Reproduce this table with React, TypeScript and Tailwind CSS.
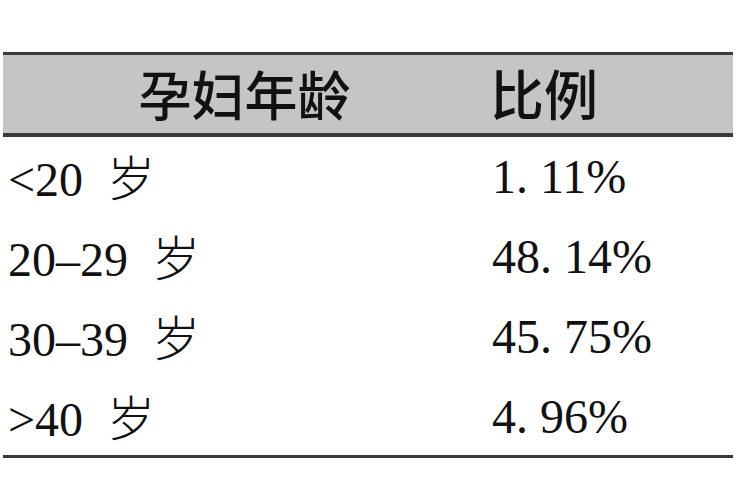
import React from "react";

const serif = { fontFamily: '"Liberation Serif", "Noto Sans CJK SC", serif' };

function Age({ pre, dash }: { pre: string; dash?: boolean }) {
  return (
    <span className="whitespace-pre">
      {dash ? pre.replace("-", "\u2013") : pre}
      <span className="inline-block w-[0.5em]" />
      <span className="font-light" style={{ fontFamily: '"Noto Sans CJK SC", sans-serif' }}>岁</span>
    </span>
  );
}

const rows: [string, string][] = [
  ["<20", "1. 11%"],
  ["20-29", "48. 14%"],
  ["30-39", "45. 75%"],
  [">40", "4. 96%"],
];

export default function App() {
  return (
    <div className="w-[750px] h-[500px] bg-white overflow-hidden pt-[52px] pl-[3px]">
      <div className="w-[730px]">
        <div className="border-t-[3px] border-b-[4px] border-[#3a3a3a] bg-[#c5c5c5] h-[85px] flex items-center text-[#111]"
          style={{ fontFamily: '"Noto Sans CJK SC", sans-serif' }}>
          <div className="w-[481px] text-center text-[53px] font-medium leading-none pl-[2px] pb-[2px]">孕妇年龄</div>
          <div className="text-[54px] font-medium leading-none pl-[6px] pb-[2px]">比例</div>
        </div>
        {rows.map(([a, b], i) => (
          <div key={i} className="h-[80px] flex items-center text-[48px] leading-none text-[#111]" style={serif}>
            <div className="w-[489px] pl-[5px]"><Age pre={a} dash /></div>
            <div className="whitespace-pre">{b}</div>
          </div>
        ))}
        <div className="h-[3px] bg-[#3a3a3a] -mt-[2px]" />
      </div>
    </div>
  );
}
